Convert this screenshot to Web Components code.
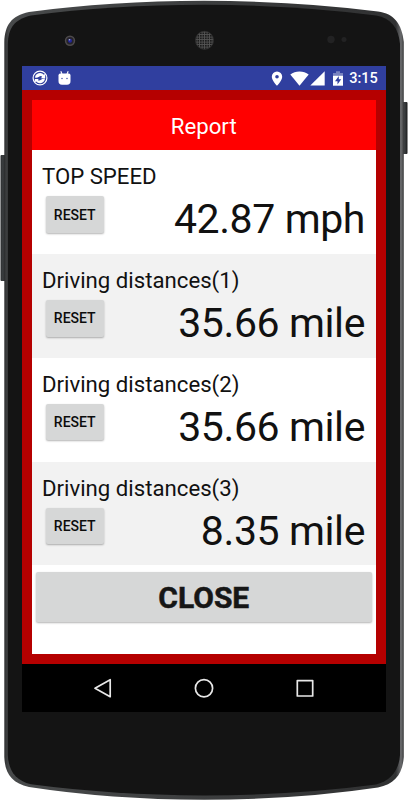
<!DOCTYPE html>
<html lang="en">
<head>
<meta charset="utf-8">
<title>Report</title>
<style>
  body {
    margin: 0;
    background: #fff;
    font-family: Roboto, "Liberation Sans", sans-serif;
  }
</style>
</head>
<body>
<phone-frame>
  <status-bar time="3:15"></status-bar>
  <report-dialog heading="Report">
    <report-row label="TOP SPEED" value="42.87 mph"></report-row>
    <report-row label="Driving distances(1)" value="35.66 mile" shaded></report-row>
    <report-row label="Driving distances(2)" value="35.66 mile"></report-row>
    <report-row label="Driving distances(3)" value="8.35 mile" shaded></report-row>
    <flat-button slot="action" large>CLOSE</flat-button>
  </report-dialog>
  <nav-bar></nav-bar>
</phone-frame>

<script>
class PhoneFrame extends HTMLElement {
  constructor() {
    super();
    this.attachShadow({ mode: "open" }).innerHTML = `
      <style>
        :host {
          display: block;
          position: relative;
          box-sizing: border-box;
          width: 408px;
          height: 800px;
          padding: 66px 22.3px 88px 21.5px;
          overflow: hidden;
        }
        .body {
          position: absolute;
          inset: 0;
        }
        .screen {
          position: relative;
          display: flex;
          flex-direction: column;
          height: 646px;
        }
      </style>
      <svg class="body" width="408" height="800" viewBox="0 0 408 800">
        <defs>
          <linearGradient id="rim" x1="0" x2="1" y1="0" y2="0">
            <stop offset="0" stop-color="#303132"/>
            <stop offset=".012" stop-color="#484a4b"/>
            <stop offset=".98" stop-color="#303132"/>
            <stop offset=".993" stop-color="#6a6b6d"/>
            <stop offset="1" stop-color="#3c3d3e"/>
          </linearGradient>
          <linearGradient id="key" x1="0" x2="1" y1="0" y2="0">
            <stop offset="0" stop-color="#2a2c2e"/>
            <stop offset=".5" stop-color="#3c3f41"/>
            <stop offset="1" stop-color="#191a1b"/>
          </linearGradient>
          <pattern id="mesh" width="2.500" height="2.500" patternUnits="userSpaceOnUse">
            <rect width="2.500" height="2.500" fill="#555"/>
            <rect width="1.700" height="1.700" fill="#1c1c1c"/>
          </pattern>
        </defs>
        <rect x="0.5" y="155" width="5" height="126" rx="1" fill="url(#key)"/>
        <rect x="402" y="102" width="5.5" height="52" rx="1" fill="url(#key)"/>
        <path d="M4.3 42C5 25 11 16 29 12Q110 1 204 .8Q298 1 378 11.500C394 13.500 402 24 403.800 42V757C402.500 774 395 784 378 787.500Q298 799.500 204 799.800Q110 799.500 29 787C12 783 5 774 4.300 757Z" fill="url(#rim)"/>
        <path d="M7.800 44C8.500 28 14 19.500 31 15.500Q112 5 204 4.800Q296 5 376 15.500C391 18 398.500 28 400 44V755C399 770 391 780.500 376 784.500Q296 795 204 795.500Q112 795 31 784.300C15 780.500 8.500 770 7.800 755Z" fill="#141414"/>
        <circle cx="70" cy="40.800" r="5.200" fill="#4e4b4c"/>
        <circle cx="70" cy="40.800" r="3.700" fill="#25232a"/>
        <circle cx="70" cy="40.800" r="2" fill="#22269a"/>
        <circle cx="69.500" cy="39.800" r=".8" fill="#aab0c8"/>
        <circle cx="204.500" cy="40.300" r="9" fill="url(#mesh)" stroke="#333" stroke-width=".8"/>
        <circle cx="331" cy="39.500" r="3.700" fill="#222223"/>
        <circle cx="344" cy="39.500" r="2.500" fill="#222223"/>
      </svg>
      <div class="screen"><slot></slot></div>
    `;
  }
}

class StatusBar extends HTMLElement {
  connectedCallback() {
    this.attachShadow({ mode: "open" }).innerHTML = `
      <style>
        :host {
          display: flex;
          flex: none;
          align-items: center;
          height: 24px;
          padding: 0 8px 0 10.500px;
          box-sizing: border-box;
          background: #303f9f;
          color: #fff;
          font-size: 14.500px;
          font-weight: 500;
          line-height: 24px;
        }
        svg { display: block; fill: #fff; }
        span { padding-top: 2px; }
        .sync { margin-right: 9.500px; }
        .pin { margin-left: auto; margin-right: 7px; }
        .wifi { margin-right: 1px; }
        .cell { margin-right: 8px; }
        .battery { margin-right: 6.500px; }
      </style>
      <svg class="sync" width="16" height="16" viewBox="0 0 16 16">
        <circle cx="8" cy="8" r="6.900" fill="none" stroke="#fff" stroke-width="1.200"/>
        <path d="M3 7.600A5.100 5.100 0 0 1 11.900 4.700L13.200 3.800V8.200H8.800L10.200 6.700Q8.800 5.200 7 6.700Q5 8.400 3 7.600Z"/>
        <path d="M13 8.600A5.100 5.100 0 0 1 4.100 11.500L2.800 12.300V8.900H6.900L5.800 10Q7.200 11.200 9 9.700Q11 8.200 13 8.600Z"/>
      </svg>
      <svg width="13" height="15" viewBox="0 0 13 15">
        <path d="M2.800 .3L4 3M10.200 .3L9 3" stroke="#fff" stroke-width="1.100"/>
        <path d="M2.200 2.500H10.800Q12.500 2.700 12.500 4.500V10Q12.500 13.800 9 13.800H4Q.5 13.800 .5 10V4.500Q.5 2.700 2.200 2.500Z"/>
        <circle cx="4" cy="7.500" r=".7" fill="#303f9f"/>
        <circle cx="9" cy="7.500" r=".7" fill="#303f9f"/>
      </svg>
      <svg class="pin" width="12" height="15" viewBox="0 0 12 15">
        <path fill-rule="evenodd" d="M6 .5A5.200 5.200 0 0 0 .8 5.700C.8 9.500 6 14.800 6 14.800S11.200 9.500 11.200 5.700A5.200 5.200 0 0 0 6 .5ZM6 3.900A1.800 1.800 0 1 1 6 7.500A1.800 1.800 0 1 1 6 3.900Z"/>
      </svg>
      <svg class="wifi" width="19" height="15" viewBox="0 0 19 15">
        <path d="M9.500 14.800L.3 3.600Q4.200 .5 9.500 .5T18.700 3.600Z"/>
      </svg>
      <svg class="cell" width="15" height="15" viewBox="0 0 15 15">
        <path d="M.3 14.500L14.700 .3V14.500Z"/>
      </svg>
      <svg class="battery" width="10" height="15" viewBox="0 0 10 15">
        <path d="M0 2H3V.3H7V2H10V5H0Z" fill-opacity=".35"/>
        <path d="M0 4.800H10V14.700H0Z"/>
        <path d="M6 4.800L2 10.200H4.500V13.500L8.200 8.300H5.800V4.800Z" fill="#303f9f"/>
      </svg>
      <span>${this.getAttribute("time")}</span>
    `;
  }
}

class ReportDialog extends HTMLElement {
  connectedCallback() {
    this.attachShadow({ mode: "open" }).innerHTML = `
      <style>
        :host {
          display: flex;
          flex-direction: column;
          flex: 1;
          box-sizing: border-box;
          padding: 10px 9.700px 10px 10px;
          background: #b50000;
        }
        header {
          height: 50.400px;
          background: #f00;
          color: #fff;
          font-size: 22.200px;
          line-height: 53px;
          text-align: center;
        }
        .rows {
          background: #fff;
        }
        footer {
          flex: 1;
          padding: 6.300px 4.300px 0;
          background: #fff;
        }
      </style>
      <header>${this.getAttribute("heading")}</header>
      <div class="rows"><slot></slot></div>
      <footer><slot name="action"></slot></footer>
    `;
  }
}

class ReportRow extends HTMLElement {
  connectedCallback() {
    this.attachShadow({ mode: "open" }).innerHTML = `
      <style>
        :host {
          display: block;
          box-sizing: border-box;
          height: 103.750px;
          padding: 12px 11px 0 10.500px;
          color: #111;
        }
        :host([shaded]) { background: #f2f2f2; }
        .label {
          font-size: 22.200px;
          line-height: 28px;
        }
        .line {
          display: flex;
          justify-content: space-between;
          padding: 6px 0 0 3.500px;
        }
        .value {
          font-size: 41px;
          line-height: 46px;
          letter-spacing: -.4px;
          white-space: nowrap;
        }
      </style>
      <div class="label">${this.getAttribute("label")}</div>
      <div class="line">
        <flat-button>RESET</flat-button>
        <span class="value">${this.getAttribute("value")}</span>
      </div>
    `;
  }
}

class FlatButton extends HTMLElement {
  constructor() {
    super();
    this.attachShadow({ mode: "open" }).innerHTML = `
      <style>
        :host {
          display: block;
          width: 58.500px;
          height: 36.500px;
        }
        :host([large]) {
          width: auto;
          height: 50.500px;
        }
        button {
          display: block;
          width: 100%;
          height: 100%;
          padding: 0;
          border: 0;
          border-radius: 2px;
          background: #d6d7d7;
          box-shadow: 0 1px 2px rgba(0, 0, 0, .3);
          color: #0c0c0c;
          font: 500 14px Roboto, "Liberation Sans", sans-serif;
        }
        :host([large]) button {
          padding-top: 1px;
          color: #161616;
          font-size: 30px;
          font-weight: 700;
          -webkit-text-stroke: .5px #161616;
        }
      </style>
      <button><slot></slot></button>
    `;
  }
}

class NavBar extends HTMLElement {
  constructor() {
    super();
    this.attachShadow({ mode: "open" }).innerHTML = `
      <style>
        :host {
          display: flex;
          flex: none;
          align-items: center;
          justify-content: center;
          gap: 81px;
          height: 48px;
          background: #000;
        }
        svg {
          display: block;
          fill: none;
          stroke: #e8e8e8;
          stroke-width: 1.700;
          stroke-linejoin: round;
        }
      </style>
      <svg width="20" height="20" viewBox="0 0 20 20"><path d="M2 10.300L17.200 1.700V18.700Z"/></svg>
      <svg width="20" height="20" viewBox="0 0 20 20"><circle cx="10" cy="10.200" r="8.600"/></svg>
      <svg width="20" height="20" viewBox="0 0 20 20"><rect x="2.300" y="2.600" width="15.400" height="15.400"/></svg>
    `;
  }
}

customElements.define("phone-frame", PhoneFrame);
customElements.define("status-bar", StatusBar);
customElements.define("report-dialog", ReportDialog);
customElements.define("flat-button", FlatButton);
customElements.define("report-row", ReportRow);
customElements.define("nav-bar", NavBar);
</script>
</body>
</html>
